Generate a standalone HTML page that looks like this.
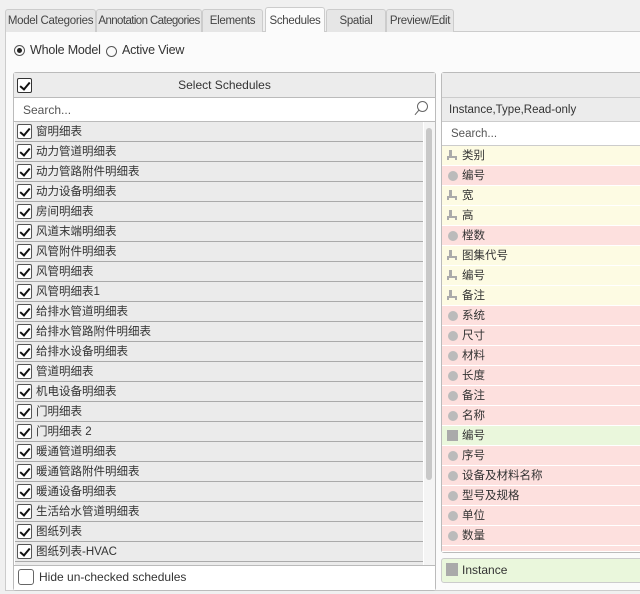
<!DOCTYPE html><html><head><meta charset="utf-8"><style>
*{box-sizing:border-box;margin:0;padding:0}
body{width:640px;height:594px;background:#f0f0f0;font-family:"Liberation Sans","Noto Sans CJK SC",sans-serif;font-size:12px;color:#333;position:relative;overflow:hidden}
.a{position:absolute;white-space:nowrap}
.tab{position:absolute;top:9px;height:23px;background:#e6e6e6;border:1px solid #ccc;border-bottom:none;border-radius:3px 3px 0 0;text-align:center;line-height:22px;font-size:11.5px;letter-spacing:-0.3px;color:#444;white-space:nowrap;overflow:hidden}
.cb{position:absolute;width:15px;height:15px;border:1px solid #555;border-radius:2px;background:#fff}
.cb:after{content:"";position:absolute;left:4px;top:1px;width:4px;height:8px;border:solid #111;border-width:0 2px 2px 0;transform:rotate(40deg)}
.row{position:absolute;left:15px;width:408px;height:20px;background:#ebebeb;border-bottom:1px solid #aaa;font-size:11.5px;line-height:20px;padding-left:21px;white-space:nowrap}
.row .cb{left:2px;top:2px}
.r{position:absolute;left:442px;width:198px;height:20px;border-bottom:1px solid #fff;font-size:11.5px;line-height:20px;padding-left:20px}
.Y{background:#fdfbe3}.P{background:#fde0de}.G{background:#eaf7dc}
.dot{position:absolute;left:6px;top:5px;width:10px;height:10px;border-radius:50%;background:#bbb}
.sq{position:absolute;left:5px;top:4px;width:11px;height:11px;background:#aaa}
.tr1{position:absolute;left:7px;top:4px;width:3px;height:6px;background:#aaa}
.tr2{position:absolute;left:5px;top:10px;width:10px;height:4px;border:2px solid #aaa;border-bottom:none}
</style></head><body>
<div class="a" style="left:5px;top:31px;width:640px;height:560px;background:#fbfbfb;border:1px solid #ccc"></div>
<div class="tab" style="left:5px;width:91px">Model Categories</div>
<div class="tab" style="left:96px;width:106px;letter-spacing:-0.6px">Annotation Categories</div>
<div class="tab" style="left:202px;width:61px">Elements</div>
<div class="tab" style="left:265px;top:7px;height:25px;width:60px;background:#fbfbfb;line-height:26px">Schedules</div>
<div class="tab" style="left:326px;width:60px">Spatial</div>
<div class="tab" style="left:386px;width:68px">Preview/Edit</div>
<div class="a" style="left:14px;top:45px;width:11px;height:11px;border:1px solid #555;border-radius:50%"><div class="a" style="left:2px;top:2px;width:5px;height:5px;border-radius:50%;background:#222"></div></div>
<div class="a" style="left:30px;top:43px;font-size:12.5px;letter-spacing:-0.2px">Whole Model</div>
<div class="a" style="left:106px;top:46px;width:11px;height:11px;border:1px solid #555;border-radius:50%"></div>
<div class="a" style="left:122px;top:43px;font-size:12.5px;letter-spacing:-0.2px">Active View</div>
<!-- left panel -->
<div class="a" style="left:13px;top:72px;width:423px;height:519px;border:1px solid #bbb;border-radius:3px;background:#fff"></div>
<div class="a" style="left:14px;top:73px;width:421px;height:25px;background:#ececec;border-bottom:1px solid #bbb"></div>
<div class="cb" style="left:17px;top:78px;border-color:#333"></div>
<div class="a" style="left:14px;top:78px;width:421px;text-align:center;font-size:12px">Select Schedules</div>
<div class="a" style="left:23px;top:103px;color:#555">Search...</div>
<div class="a" style="left:417px;top:101px;width:11px;height:11px;border:1.3px solid #666;border-radius:50%"></div>
<div class="a" style="left:414px;top:112px;width:6px;height:1.3px;background:#666;transform:rotate(-50deg)"></div>
<div class="a" style="left:14px;top:121px;width:421px;height:1px;background:#bbb"></div>
<div class="row" style="top:122px"><span class="cb"></span>窗明细表</div>
<div class="row" style="top:142px"><span class="cb"></span>动力管道明细表</div>
<div class="row" style="top:162px"><span class="cb"></span>动力管路附件明细表</div>
<div class="row" style="top:182px"><span class="cb"></span>动力设备明细表</div>
<div class="row" style="top:202px"><span class="cb"></span>房间明细表</div>
<div class="row" style="top:222px"><span class="cb"></span>风道末端明细表</div>
<div class="row" style="top:242px"><span class="cb"></span>风管附件明细表</div>
<div class="row" style="top:262px"><span class="cb"></span>风管明细表</div>
<div class="row" style="top:282px"><span class="cb"></span>风管明细表1</div>
<div class="row" style="top:302px"><span class="cb"></span>给排水管道明细表</div>
<div class="row" style="top:322px"><span class="cb"></span>给排水管路附件明细表</div>
<div class="row" style="top:342px"><span class="cb"></span>给排水设备明细表</div>
<div class="row" style="top:362px"><span class="cb"></span>管道明细表</div>
<div class="row" style="top:382px"><span class="cb"></span>机电设备明细表</div>
<div class="row" style="top:402px"><span class="cb"></span>门明细表</div>
<div class="row" style="top:422px"><span class="cb"></span>门明细表 2</div>
<div class="row" style="top:442px"><span class="cb"></span>暖通管道明细表</div>
<div class="row" style="top:462px"><span class="cb"></span>暖通管路附件明细表</div>
<div class="row" style="top:482px"><span class="cb"></span>暖通设备明细表</div>
<div class="row" style="top:502px"><span class="cb"></span>生活给水管道明细表</div>
<div class="row" style="top:522px"><span class="cb"></span>图纸列表</div>
<div class="row" style="top:542px"><span class="cb"></span>图纸列表-HVAC</div>
<div class="row" style="top:562px;height:3px;border:none"></div>
<div class="a" style="left:424px;top:122px;width:11px;height:443px;background:#f4f4f4"></div>
<div class="a" style="left:426px;top:128px;width:6px;height:352px;background:#c8c8c8;border-radius:3px"></div>
<div class="a" style="left:14px;top:565px;width:421px;height:25px;background:#fff;border-top:1px solid #bbb"></div>
<div class="a" style="left:18px;top:569px;width:16px;height:16px;border:1px solid #666;border-radius:3px"></div>
<div class="a" style="left:39px;top:570px;font-size:12px">Hide un-checked schedules</div>
<!-- right panel -->
<div class="a" style="left:441px;top:72px;width:210px;height:481px;border:1px solid #bbb;border-radius:3px;background:#fff"></div>
<div class="a" style="left:442px;top:73px;width:198px;height:25px;background:#ececec;border-bottom:1px solid #ccc"></div>
<div class="a" style="left:442px;top:98px;width:198px;height:24px;background:#ececec;border-bottom:1px solid #ccc"></div>
<div class="a" style="left:449px;top:104px;font-size:11.5px">Instance,Type,Read-only</div>
<div class="a" style="left:451px;top:128px;font-size:11.5px;color:#555">Search...</div>
<div class="a" style="left:442px;top:145px;width:198px;height:1px;background:#ccc"></div>
<div class="r Y" style="top:146px"><span class="tr1"></span><span class="tr2"></span>类别</div>
<div class="r P" style="top:166px"><i class="dot"></i>编号</div>
<div class="r Y" style="top:186px"><span class="tr1"></span><span class="tr2"></span>宽</div>
<div class="r Y" style="top:206px"><span class="tr1"></span><span class="tr2"></span>高</div>
<div class="r P" style="top:226px"><i class="dot"></i>樘数</div>
<div class="r Y" style="top:246px"><span class="tr1"></span><span class="tr2"></span>图集代号</div>
<div class="r Y" style="top:266px"><span class="tr1"></span><span class="tr2"></span>编号</div>
<div class="r Y" style="top:286px"><span class="tr1"></span><span class="tr2"></span>备注</div>
<div class="r P" style="top:306px"><i class="dot"></i>系统</div>
<div class="r P" style="top:326px"><i class="dot"></i>尺寸</div>
<div class="r P" style="top:346px"><i class="dot"></i>材料</div>
<div class="r P" style="top:366px"><i class="dot"></i>长度</div>
<div class="r P" style="top:386px"><i class="dot"></i>备注</div>
<div class="r P" style="top:406px"><i class="dot"></i>名称</div>
<div class="r G" style="top:426px"><i class="sq"></i>编号</div>
<div class="r P" style="top:446px"><i class="dot"></i>序号</div>
<div class="r P" style="top:466px"><i class="dot"></i>设备及材料名称</div>
<div class="r P" style="top:486px"><i class="dot"></i>型号及规格</div>
<div class="r P" style="top:506px"><i class="dot"></i>单位</div>
<div class="r P" style="top:526px"><i class="dot"></i>数量</div>
<div class="r P" style="top:546px;height:6px"></div>
<div class="a" style="left:441px;top:558px;width:210px;height:25px;background:#eaf7dc;border:1px solid #ccc;border-radius:3px"></div>
<div class="a" style="left:446px;top:563px;width:12px;height:13px;background:#aaa"></div>
<div class="a" style="left:462px;top:563px;font-size:12px">Instance</div>
</body></html>
